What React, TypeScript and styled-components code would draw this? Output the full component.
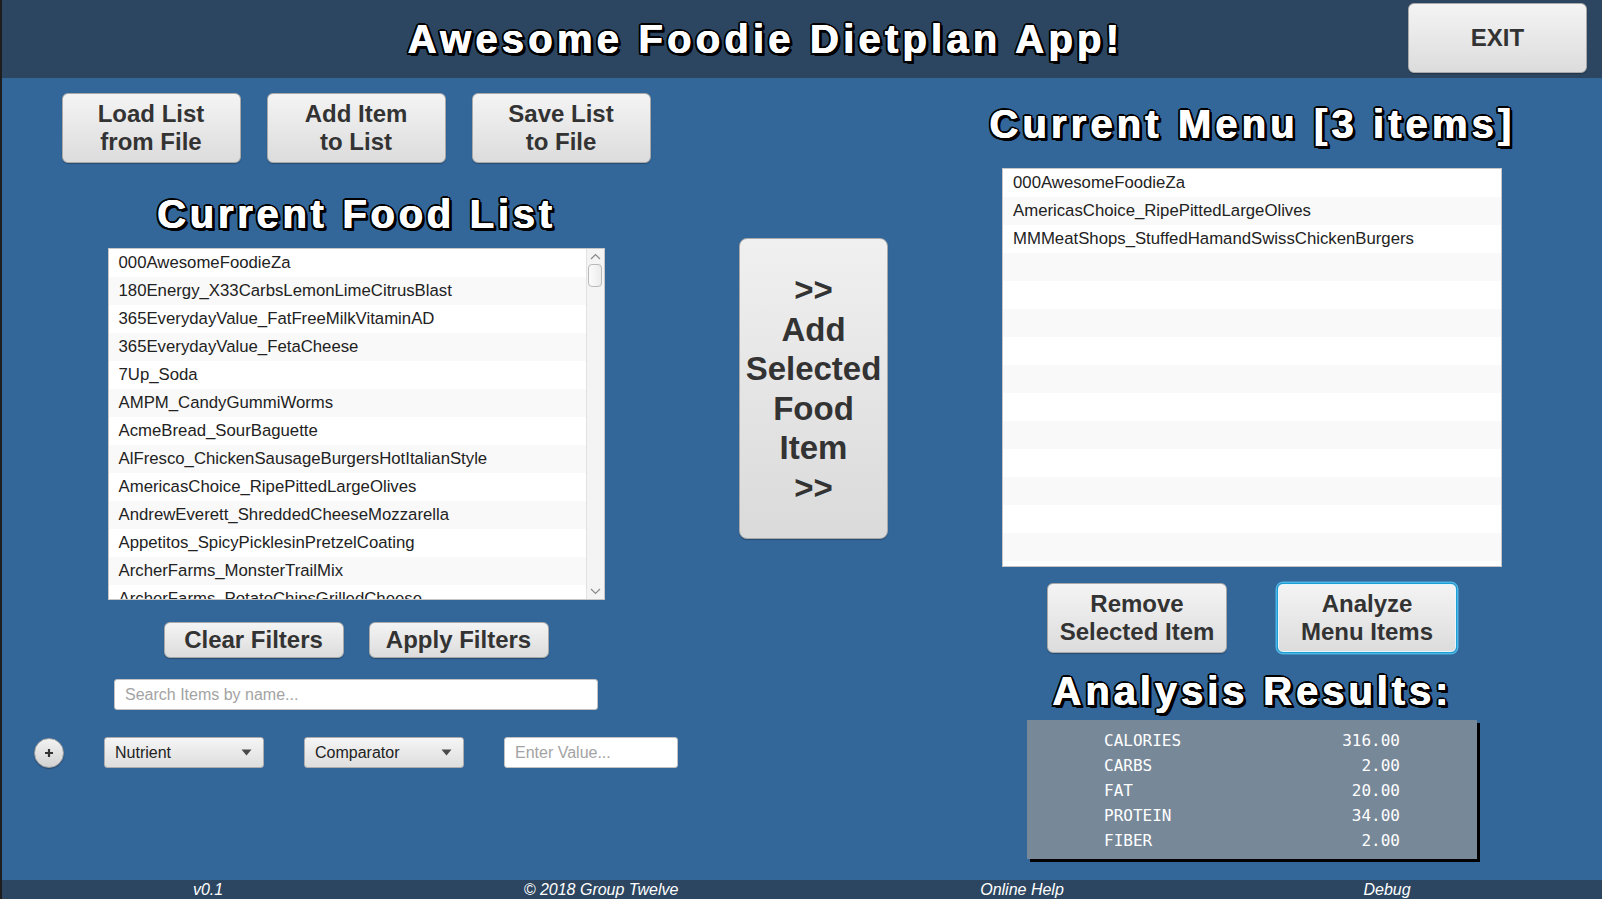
import React from 'react'
import styled, { createGlobalStyle, css } from 'styled-components'

const GlobalStyle = createGlobalStyle`
  html, body {
    margin: 0;
    padding: 0;
  }
  body {
    background: #336699;
    font-family: "Liberation Sans", Arial, sans-serif;
    overflow: hidden;
  }
  * {
    box-sizing: border-box;
  }
`

const Root = styled.div`
  width: 100%;
  height: 100vh;
  display: flex;
  flex-direction: column;
  border-left: 2px solid #1e1e1e;
  background: #336699;
`

const Header = styled.header`
  height: 78px;
  flex: none;
  display: flex;
  background: #2c4661;
`

const TitleArea = styled.div`
  flex: 1;
  display: flex;
  align-items: center;
  justify-content: center;
  padding-left: 120px;
`

// white faux-bold first, then a black outline and a drop shadow
const outline = css`
  color: #fff;
  font-weight: bold;
  text-shadow:
    0.7px 0 0 #fff, 0.7px 0.4px 0 #fff,
    -1.5px -1.5px 0 #000, 2.2px -1.5px 0 #000, -1.5px 1.5px 0 #000, 2.2px 1.5px 0 #000,
    0 -1.7px 0 #000, 0.7px 1.7px 0 #000, -1.7px 0 0 #000, 2.4px 0 0 #000,
    3.5px 3px 0 #000, 2.5px 3.2px 0 #000, 3.6px 2px 0 #000;
`

const Title = styled.h1`
  ${outline};
  margin: 0;
  font-size: 40px;
  line-height: 48px;
  letter-spacing: 4.2px;
`

const Heading = styled.h2<{ $top: number; $spacing: number }>`
  ${outline};
  margin: ${p => p.$top}px 0 0;
  font-size: 40px;
  line-height: 48px;
  letter-spacing: ${p => p.$spacing}px;
  text-align: center;
`

const Button = styled.button<{ $w: number; $h: number; $focused?: boolean }>`
  width: ${p => p.$w}px;
  height: ${p => p.$h}px;
  flex: none;
  padding: 0;
  border: 1px solid #a9a9a9;
  border-radius: 6px;
  background: linear-gradient(#f4f4f4, #dcdcdc);
  box-shadow: 0 1px 1px rgba(0, 0, 0, 0.25);
  color: #333;
  font-family: "Liberation Sans", Arial, sans-serif;
  font-weight: bold;
  font-size: 24px;
  line-height: 28px;
  cursor: pointer;
  ${p => p.$focused && css`
    border-color: #1a9fd8;
    box-shadow: 0 0 0 1.5px #4fb6e4, inset 0 0 0 1px #e9f6fc;
  `}
`

const ExitButton = styled(Button)`
  margin: 3px 15px 0 0;
`

const Main = styled.main`
  flex: 1;
  display: grid;
  grid-template-columns: 708px 192px 1fr;
`

const Column = styled.section<{ $top: number }>`
  display: flex;
  flex-direction: column;
  align-items: center;
  padding-top: ${p => p.$top}px;
`

const Middle = styled.section`
  padding: 160px 0 0 29px;
`

const Row = styled.div<{ $gap: number; $top?: number }>`
  display: flex;
  align-items: center;
  gap: ${p => p.$gap}px;
  margin-top: ${p => p.$top ?? 0}px;
`

const BigButton = styled(Button)`
  font-size: 33px;
  line-height: 39.5px;
  border-radius: 8px;
  background: linear-gradient(#f0f0f0, #dadada);
`

const ListBox = styled.div<{ $w: number; $h: number; $top: number }>`
  width: ${p => p.$w}px;
  height: ${p => p.$h}px;
  margin-top: ${p => p.$top}px;
  display: flex;
  background: #fff;
  border: 1px solid #c6c6c6;
  overflow: hidden;
`

const Items = styled.ul`
  flex: 1;
  margin: 0;
  padding: 0;
  list-style: none;
  overflow: hidden;
`

const Item = styled.li`
  height: 28px;
  padding-left: 10px;
  display: flex;
  align-items: center;
  font-size: 16.75px;
  color: #222;
  white-space: nowrap;
  background: #fff;
  &:nth-child(even) {
    background: #f9f9f9;
  }
`

const ScrollTrack = styled.div`
  width: 18px;
  flex: none;
  display: flex;
  flex-direction: column;
  align-items: center;
  background: #f4f4f4;
  border-left: 1px solid #e2e2e2;
`

const Arrow = styled.svg`
  flex: none;
  margin: 4px 0;
`

const Thumb = styled.div`
  width: 14px;
  height: 23px;
  border: 1px solid #b9b9b9;
  border-radius: 4px;
  background: linear-gradient(90deg, #fbfbfb, #ececec);
`

const Spacer = styled.div`
  flex: 1;
`

const SearchInput = styled.input<{ $w: number }>`
  width: ${p => p.$w}px;
  height: 31px;
  flex: none;
  padding: 0 0 0 10px;
  border: 1px solid #c2c2c2;
  border-radius: 3px;
  background: #fff;
  font-family: "Liberation Sans", Arial, sans-serif;
  font-size: 16px;
  color: #222;
  outline: none;
  &::placeholder {
    color: #a3a3a3;
  }
`

const PlusButton = styled.button`
  width: 30px;
  height: 30px;
  flex: none;
  padding: 0;
  border-radius: 50%;
  border: 1px solid #a0a0a0;
  background: linear-gradient(#f2f2f2, #d2d2d2);
  box-shadow: 0 1px 1px rgba(0, 0, 0, 0.3);
  display: flex;
  align-items: center;
  justify-content: center;
`

const Select = styled.div`
  width: 160px;
  height: 31px;
  flex: none;
  display: flex;
  align-items: center;
  justify-content: space-between;
  padding: 0 11px 0 10px;
  border: 1px solid #adadad;
  border-radius: 3px;
  background: linear-gradient(#f5f5f5, #dedede);
  font-size: 16px;
  color: #222;
`

const Results = styled.div`
  width: 450px;
  height: 139px;
  margin-top: 5px;
  padding: 8px 77px 0;
  display: grid;
  grid-template-columns: 1fr auto;
  grid-auto-rows: 25px;
  align-items: center;
  background: #778899;
  box-shadow: 3px 3px 0 #000;
  font-family: "DejaVu Sans Mono", "Liberation Mono", monospace;
  font-size: 16px;
  color: #fff;
`

const Value = styled.span`
  text-align: right;
`

const Footer = styled.footer`
  height: 19px;
  flex: none;
  display: grid;
  grid-template-columns: 412px 374px 468px 262px;
  background: #2c4661;
  color: #fff;
  font-style: italic;
  font-size: 16px;
  line-height: 19px;
  text-align: center;
`

const foods = [
  '000AwesomeFoodieZa',
  '180Energy_X33CarbsLemonLimeCitrusBlast',
  '365EverydayValue_FatFreeMilkVitaminAD',
  '365EverydayValue_FetaCheese',
  '7Up_Soda',
  'AMPM_CandyGummiWorms',
  'AcmeBread_SourBaguette',
  'AlFresco_ChickenSausageBurgersHotItalianStyle',
  'AmericasChoice_RipePittedLargeOlives',
  'AndrewEverett_ShreddedCheeseMozzarella',
  'Appetitos_SpicyPicklesinPretzelCoating',
  'ArcherFarms_MonsterTrailMix',
  'ArcherFarms_PotatoChipsGrilledCheese',
]

const menu = [
  '000AwesomeFoodieZa',
  'AmericasChoice_RipePittedLargeOlives',
  'MMMeatShops_StuffedHamandSwissChickenBurgers',
]

const results: [string, string][] = [
  ['CALORIES', '316.00'],
  ['CARBS', '2.00'],
  ['FAT', '20.00'],
  ['PROTEIN', '34.00'],
  ['FIBER', '2.00'],
]

const Chevron = ({ up }: { up?: boolean }) => (
  <Arrow width="11" height="7" viewBox="0 0 11 7">
    <path d={up ? 'M1 6 L5.5 1.5 L10 6' : 'M1 1 L5.5 5.5 L10 1'} fill="none" stroke="#8a8a8a" strokeWidth="1.2" />
  </Arrow>
)

const Caret = () => (
  <svg width="11" height="7" viewBox="0 0 11 7">
    <path d="M0.5 0.5 H10.5 L5.5 6.5 Z" fill="#4a4a4a" />
  </svg>
)

const App: React.FC = () => {
  const menuRows = [...menu, ...Array(12).fill('')]

  return (
    <Root>
      <GlobalStyle />
      <Header>
        <TitleArea>
          <Title>Awesome Foodie Dietplan App!</Title>
        </TitleArea>
        <ExitButton $w={179} $h={70}>EXIT</ExitButton>
      </Header>

      <Main>
        <Column $top={15}>
          <Row $gap={26}>
            <Button $w={179} $h={70}>Load List<br />from File</Button>
            <Button $w={179} $h={70}>Add Item<br />to List</Button>
            <Button $w={179} $h={70}>Save List<br />to File</Button>
          </Row>

          <Heading $top={27} $spacing={3.7}>Current Food List</Heading>

          <ListBox $w={497} $h={352} $top={10}>
            <Items>
              {foods.map(f => <Item key={f}>{f}</Item>)}
            </Items>
            <ScrollTrack>
              <Chevron up />
              <Thumb />
              <Spacer />
              <Chevron />
            </ScrollTrack>
          </ListBox>

          <Row $gap={25} $top={22}>
            <Button $w={180} $h={36}>Clear Filters</Button>
            <Button $w={180} $h={36}>Apply Filters</Button>
          </Row>

          <Row $gap={0} $top={21}>
            <SearchInput $w={484} placeholder="Search Items by name..." />
          </Row>

          <Row $gap={40} $top={27}>
            <PlusButton>
              <svg width="10" height="10" viewBox="0 0 10 10">
                <path d="M5 1 V9 M1 5 H9" stroke="#333" strokeWidth="2.2" />
              </svg>
            </PlusButton>
            <Select>Nutrient<Caret /></Select>
            <Select>Comparator<Caret /></Select>
            <SearchInput $w={174} placeholder="Enter Value..." />
          </Row>
        </Column>

        <Middle>
          <BigButton $w={149} $h={301}>
            &gt;&gt;<br />Add<br />Selected<br />Food<br />Item<br />&gt;&gt;
          </BigButton>
        </Middle>

        <Column $top={22}>
          <Heading $top={0} $spacing={4.1}>Current Menu [3 items]</Heading>

          <ListBox $w={500} $h={399} $top={20}>
            <Items>
              {menuRows.map((m, i) => <Item key={i}>{m}</Item>)}
            </Items>
          </ListBox>

          <Row $gap={50} $top={16}>
            <Button $w={180} $h={70}>Remove<br />Selected Item</Button>
            <Button $w={180} $h={70} $focused>Analyze<br />Menu Items</Button>
          </Row>

          <Heading $top={14} $spacing={3.9}>Analysis Results:</Heading>

          <Results>
            {results.map(([k, v]) => (
              <React.Fragment key={k}>
                <span>{k}</span>
                <Value>{v}</Value>
              </React.Fragment>
            ))}
          </Results>
        </Column>
      </Main>

      <Footer>
        <span>v0.1</span>
        <span>© 2018 Group Twelve</span>
        <span>Online Help</span>
        <span>Debug</span>
      </Footer>
    </Root>
  )
}

export default App
